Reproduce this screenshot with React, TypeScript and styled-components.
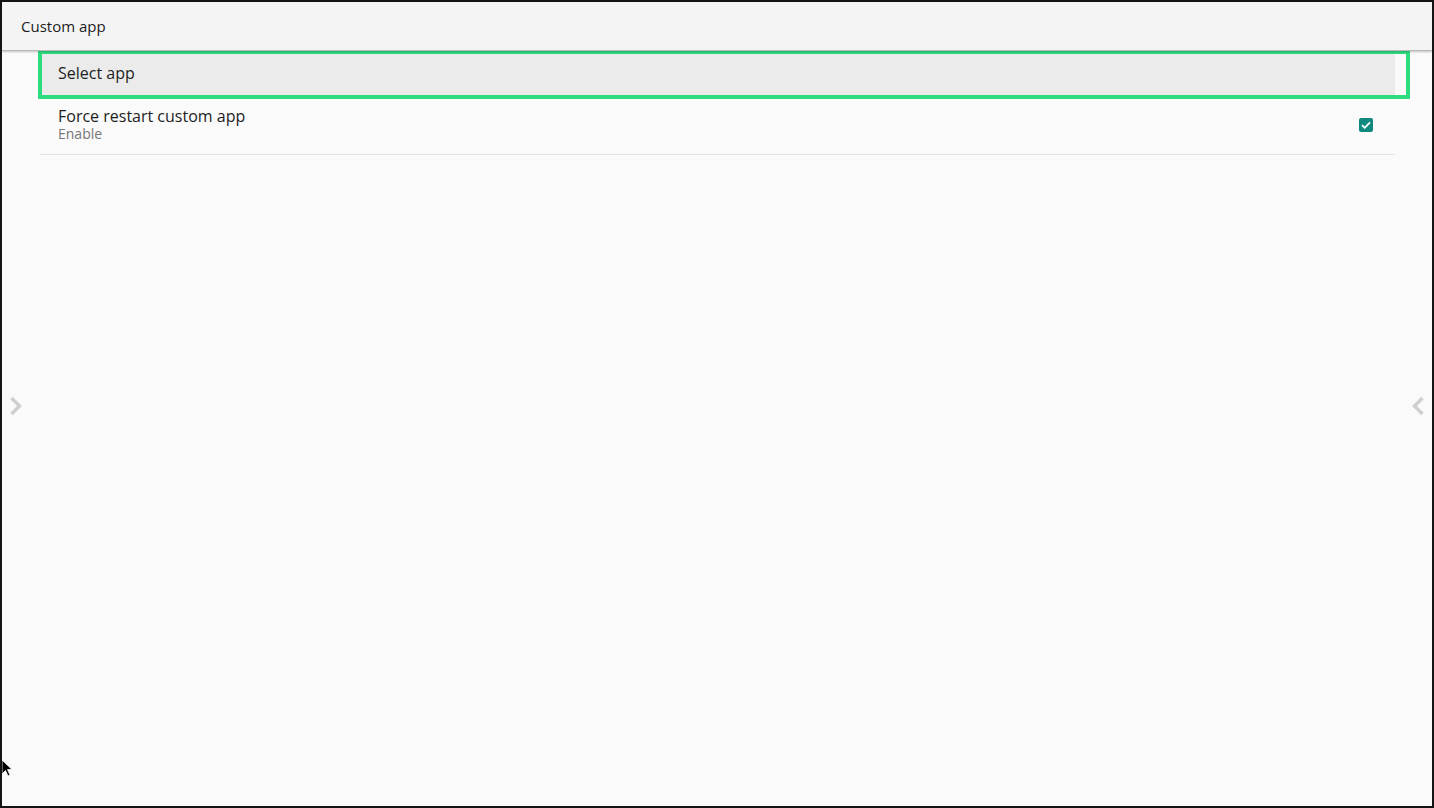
import React from "react";
import styled, { createGlobalStyle } from "styled-components";

const Global = createGlobalStyle`
  html, body { margin: 0; padding: 0; background: #fafafa; }
  body { font-family: "Open Sans", "Noto Sans", sans-serif; }
`;

const Frame = styled.div`
  position: relative;
  width: 1434px;
  height: 808px;
  box-sizing: border-box;
  border-style: solid;
  border-color: #141414;
  border-width: 2px 2px 2px 2px;
  background: #fafafa;
  display: flex;
  flex-direction: column;
  overflow: hidden;
`;

const Header = styled.header`
  position: relative;
  z-index: 2;
  height: 48px;
  flex: none;
  background: #f4f4f4;
  box-shadow: 0 1px 0 #b9b9b9, 0 2px 2px rgba(0, 0, 0, 0.22);
  display: flex;
  align-items: center;
  padding-left: 19px;
  font-size: 15px;
  color: #1c1c1c;
`;

const Content = styled.main`
  flex: 1;
  padding: 0 37px 0 38px;
`;

const List = styled.ul`
  list-style: none;
  margin: 0;
  padding: 0;
`;

const Row = styled.li<{ $focused?: boolean; $tall?: boolean }>`
  position: relative;
  height: ${(p) => (p.$tall ? "58px" : "47px")};
  box-sizing: border-box;
  display: flex;
  align-items: center;
  justify-content: space-between;
  padding: 0 22px 0 18px;
  background: ${(p) => (p.$focused ? "#ebebeb" : "transparent")};
  border-bottom: ${(p) => (p.$tall ? "1px solid #e2e2e2" : "none")};

  ${(p) =>
    p.$focused &&
    `
    &::after {
      content: "";
      position: absolute;
      top: 0;
      left: -2px;
      right: -15px;
      bottom: -2px;
      border: 4px solid #2edc80;
      pointer-events: none;
    }
  `}
`;

const TextCol = styled.div<{ $shift: number }>`
  display: flex;
  flex-direction: column;
  margin-top: ${(p) => p.$shift}px;
`;

const Title = styled.span`
  font-size: 16px;
  color: #1e1e1e;
  line-height: 20px;
`;

const Summary = styled.span`
  font-size: 14px;
  color: #777;
  line-height: 16px;
`;

const Check = styled.span`
  width: 14px;
  height: 14px;
  border-radius: 2px;
  background: #11897f;
  display: flex;
  align-items: center;
  justify-content: center;
  margin-top: -2px;
`;

const Chevron = styled.div<{ $side: "left" | "right" }>`
  position: absolute;
  top: 392px;
  ${(p) => (p.$side === "left" ? "left: 5px;" : "right: 5px;")}
  width: 18px;
  height: 24px;
  display: flex;
  align-items: center;
  justify-content: center;
`;

const Cursor = styled.div`
  position: absolute;
  left: 0px;
  top: 758px;
  width: 12px;
  height: 18px;
`;

export default function App() {
  return (
    <>
      <Global />
      <Frame>
        <Header>Custom app</Header>
        <Content>
          <List>
            <Row $focused>
              <TextCol $shift={-2}>
                <Title>Select app</Title>
              </TextCol>
            </Row>
            <Row $tall>
              <TextCol $shift={-3}>
                <Title>Force restart custom app</Title>
                <Summary>Enable</Summary>
              </TextCol>
              <Check>
                <svg width="10" height="8" viewBox="0 0 10 8">
                  <path d="M1 4.2 L3.7 6.8 L9 1.4" fill="none" stroke="#fff" strokeWidth="1.8" />
                </svg>
              </Check>
            </Row>
          </List>
        </Content>
        <Chevron $side="left">
          <svg width="14" height="20" viewBox="0 0 14 20">
            <path d="M2.5 2 L10.5 10 L2.5 18" fill="none" stroke="#cfcfcf" strokeWidth="3.4" />
          </svg>
        </Chevron>
        <Chevron $side="right">
          <svg width="14" height="20" viewBox="0 0 14 20">
            <path d="M11.5 2 L3.5 10 L11.5 18" fill="none" stroke="#cfcfcf" strokeWidth="3.4" />
          </svg>
        </Chevron>
        <Cursor>
          <svg width="12" height="18" viewBox="0 0 12 18">
            <path d="M0 0 L0 14 L3.5 10.5 L6 16 L8 15 L5.5 9.5 L10 9.5 Z" fill="#000" stroke="#fff" strokeWidth="0.8" />
          </svg>
        </Cursor>
      </Frame>
    </>
  );
}
